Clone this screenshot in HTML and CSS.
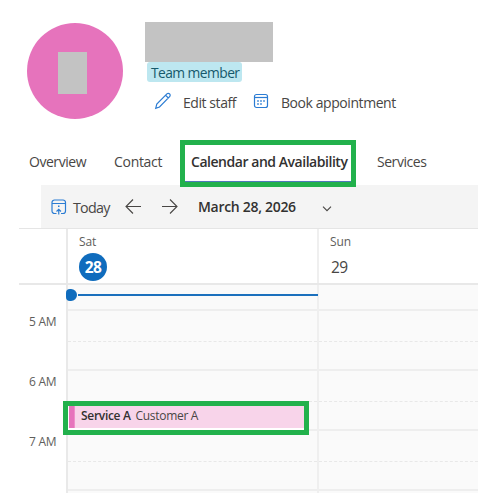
FILE: index.html
```html
<!DOCTYPE html>
<html lang="en">
<head>
    <meta charset="UTF-8">
    <meta name="viewport" content="width=device-width, initial-scale=1.0">
    <title>Staff calendar</title>
    <link rel="stylesheet" href="styles.css">
</head>
<body>

    <!-- Staff profile -->
    <header class="profile">
        <div class="avatar"><div class="initials"></div></div>
        <div class="details">
            <div class="name"></div>
            <div class="role">Team member</div>
            <div class="actions">
                <svg class="icon-edit" width="18" height="18" viewBox="0 0 18 18">
                    <path d="M1.700 16.300l1.100-4.300L12.900 1.900a1.900 1.900 0 0 1 2.700 0 1.900 1.900 0 0 1 0 2.700L5.500 15zM11.500 3.200l2.800 2.800"/>
                </svg>
                <span class="action t-edit">Edit staff</span>
                <svg class="icon-book" width="16" height="16" viewBox="0 0 16 16">
                    <rect x="1.500" y="1.500" width="13" height="13" rx="2"/>
                    <path d="M1.500 4.500h13"/>
                    <path class="dots" d="M7.200 8h1.600M10.200 8h1.600M4.200 11h1.600M7.200 11h1.600M4.200 8h1.600"/>
                </svg>
                <span class="action">Book appointment</span>
            </div>
        </div>
    </header>

    <!-- Tabs -->
    <nav class="tabs">
        <a class="tab t-overview">Overview</a>
        <a class="tab t-contact">Contact</a>
        <a class="tab active">Calendar and Availability</a>
        <a class="tab">Services</a>
    </nav>

    <!-- Date toolbar -->
    <div class="toolbar">
        <svg class="icon-today" width="16" height="16" viewBox="0 0 16 16">
            <path d="M5.500 14.500h-2a2.500 2.500 0 0 1-2.500-2.500V3.500A2.500 2.500 0 0 1 3.500 1h8.500A2.500 2.500 0 0 1 14.500 3.500V12a2.500 2.500 0 0 1-2.500 2.500h-2M1 4.500h13.500M7.750 15.500v-4.500M5.500 12.500l2.250-2.200 2.250 2.200"/>
            <path class="dots" d="M7 7.200h1.500"/>
        </svg>
        <span class="today">Today</span>
        <svg class="icon-prev" width="17" height="16" viewBox="0 0 17 16"><path d="M16 7.500H1M8 .5l-7 7 7 7"/></svg>
        <svg class="icon-next" width="17" height="16" viewBox="0 0 17 16"><path d="M1 7.500h15M9 .5l7 7-7 7"/></svg>
        <span class="date">March 28, 2026</span>
        <svg class="icon-down" width="10" height="6" viewBox="0 0 10 6"><path d="M1 .7l4 4 4-4"/></svg>
    </div>

    <!-- Calendar -->
    <main class="calendar">
        <div class="days">
            <div class="corner"></div>
            <div class="day">
                <div class="weekday">Sat</div>
                <div class="number current">28</div>
            </div>
            <div class="day">
                <div class="weekday">Sun</div>
                <div class="number">29</div>
            </div>
        </div>
        <div class="hours">
            <div class="labels">
                <div class="label">5 AM</div>
                <div class="label">6 AM</div>
                <div class="label">7 AM</div>
            </div>
            <div class="column">
                <div class="slot first"></div>
                <div class="slot"></div>
                <div class="slot"></div>
                <div class="slot"></div>
                <div class="slot last"></div>
                <div class="now"></div>
                <div class="booking"><span class="service">Service A</span><span class="customer">Customer A</span></div>
            </div>
            <div class="column">
                <div class="slot first"></div>
                <div class="slot"></div>
                <div class="slot"></div>
                <div class="slot"></div>
                <div class="slot last"></div>
            </div>
        </div>
    </main>

</body>
</html>
```
FILE: styles.css
```css
* {
    box-sizing: border-box;
}
body {
    margin: 0;
    height: 493px;
    overflow: hidden;
    background: #fff;
    color: #484644;
    font-family: "Open Sans", "Noto Sans", sans-serif;
    font-size: 14px;
    line-height: 20px;
    white-space: nowrap;
}
svg {
    flex: none;
    fill: none;
    stroke: #2b7cd3;
    stroke-width: 1.2;
}
.dots {
    stroke-width: 1.6;
}

/* Profile */
.profile {
    display: flex;
    height: 140px;
    padding: 22px 0 0 26.5px;
}
.avatar {
    display: flex;
    justify-content: center;
    align-items: center;
    width: 96px;
    height: 96px;
    margin: 1px 22.5px 0 0;
    border-radius: 50%;
    background: #e673bc;
}
.initials {
    width: 29px;
    height: 42px;
    margin: 4px 4px 0 0;
    background: #c3c3c3;
}
.name {
    width: 128px;
    height: 40px;
    background: #c3c3c3;
}
.role {
    width: 95px;
    height: 20px;
    margin-left: 2px;
    padding-left: 4px;
    border-radius: 3px;
    background: #bde7f0;
    color: #16596c;
    font-size: 13.8px;
    letter-spacing: -0.55px;
    line-height: 22px;
}
.actions {
    display: flex;
    align-items: center;
    height: 40px;
    padding-left: 9px;
}
.action {
    margin-top: 2px;
    letter-spacing: -0.43px;
}
.icon-edit {
    margin: 0 11px 2px 0;
}
.t-edit {
    width: 70px;
}
.icon-book {
    margin: 0 12px 2px 0;
}

/* Tabs */
.tabs {
    display: flex;
    height: 45px;
    padding-left: 29px;
    line-height: 44px;
}
.tab {
    letter-spacing: -0.46px;
}
.t-overview {
    width: 85px;
}
.t-contact {
    width: 66px;
    letter-spacing: -0.3px;
}
.active {
    position: relative;
    width: 176px;
    height: 47px;
    margin-right: 21px;
    padding-left: 6px;
    border: 5px solid #22b14c;
    background: #fff;
    color: #323130;
    font-weight: 600;
    line-height: 34px;
    box-shadow: inset 0 -1px #4f78b8;
}

/* Toolbar */
.toolbar {
    display: flex;
    align-items: center;
    height: 43px;
    margin-left: 41px;
    padding-left: 10px;
    background: #f4f4f4;
}
.today {
    width: 52px;
    margin: 2px 0 0 6px;
    font-size: 14.3px;
    letter-spacing: -0.75px;
}
.icon-prev,
.icon-next,
.icon-down {
    stroke: #484644;
    stroke-width: 1.1;
}
.icon-next {
    margin: 0 20px 0 19px;
}
.date {
    width: 124px;
    color: #323130;
    font-weight: 600;
    letter-spacing: -0.3px;
}
.icon-down {
    margin-top: 4px;
}

/* Calendar */
.calendar {
    margin-left: 19px;
}
.days {
    display: grid;
    grid-template-columns: 47px 251px 1fr;
    height: 57px;
    border-top: 1px solid #e5e5e5;
    border-bottom: 2px solid #e8e8e8;
}
.day {
    padding: 3px 0 0 11px;
    border-left: 2px solid #e9e9e9;
}
.weekday {
    color: #605e5c;
    font-size: 12px;
    letter-spacing: -0.1px;
}
.number {
    height: 28px;
    margin-top: 1px;
    padding-left: 1px;
    font-size: 15.5px;
    letter-spacing: -0.5px;
    line-height: 28px;
}
.current {
    width: 28px;
    padding: 0;
    border-radius: 50%;
    background: #0f6cbd;
    color: #fff;
    font-weight: 700;
    text-align: center;
}
.hours {
    display: grid;
    grid-template-columns: 47px 251px 1fr;
    height: 208px;
}
.labels {
    padding: 27px 0 0 10px;
    color: #605e5c;
    font-size: 12px;
    letter-spacing: -0.3px;
}
.label {
    height: 60px;
}
.column {
    position: relative;
    height: 208px;
    border-left: 2px solid #e9e9e9;
    background: #fafafa;
}
.column:last-child,
.day:last-child {
    border-color: #efefef;
}
.slot {
    height: 60px;
    border-top: 2px solid #eee;
}
.slot::after {
    display: block;
    height: 30px;
    border-bottom: 1px dashed #e8e8e8;
    content: "";
}
.first {
    height: 24px;
    border: 0;
}
.last {
    height: 4px;
}
.first::after,
.last::after {
    display: none;
}

/* Current time */
.now {
    position: absolute;
    top: 9px;
    right: -1px;
    left: 10px;
    z-index: 1;
    height: 2px;
    background: #1b70bd;
}
.now::before {
    position: absolute;
    top: -5px;
    left: -12px;
    width: 11px;
    height: 12px;
    border-radius: 4px 6px 6px 4px;
    background: #0f6cbd;
    content: "";
}

/* Booking drawn over the hour slots */
.booking {
    position: absolute;
    top: 116px;
    left: -5px;
    z-index: 1;
    display: flex;
    width: 246px;
    height: 34px;
    padding-left: 13px;
    border: 5px solid #22b14c;
    background: linear-gradient(#fff, #fff) bottom / 100% 2px no-repeat, linear-gradient(90deg, #fff 1px, #e673bc 1px, #e673bc 6px, #ef8ecb 6px, #ef8ecb 7px, #f8d4ea 7px);
    font-size: 12px;
    letter-spacing: -0.3px;
    line-height: 20px;
}
.service {
    width: 54.5px;
    color: #323130;
    font-weight: 600;
}
```
